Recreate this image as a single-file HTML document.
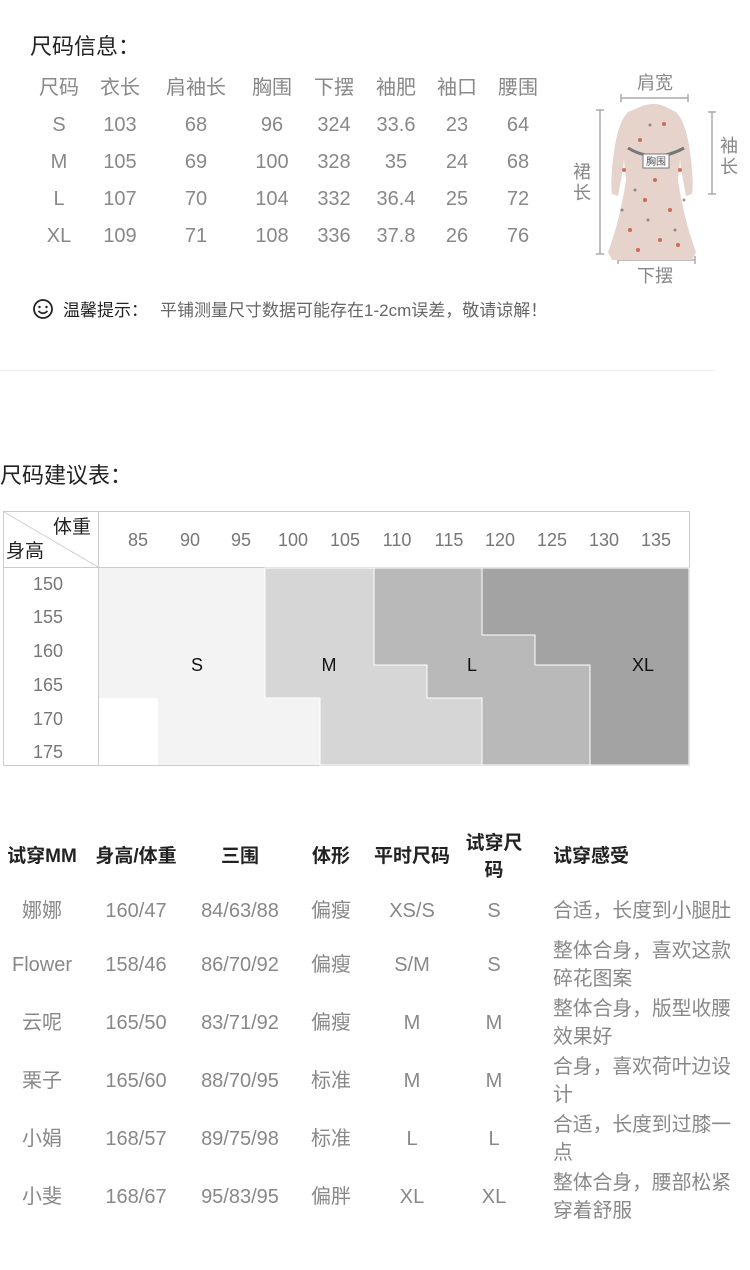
<!DOCTYPE html>
<html><head><meta charset="utf-8"><style>
*{margin:0;padding:0;box-sizing:border-box}
body{width:750px;height:1270px;background:#fff;position:relative;overflow:hidden;font-family:"Liberation Sans","Noto Sans CJK SC",sans-serif;color:#888}
.c{position:absolute;width:120px;text-align:center;white-space:nowrap;line-height:24px;transform:translate(-60px,-12px);font-size:20px}
.t{position:absolute;font-size:22px;color:#222;white-space:nowrap;line-height:26px}
.h{position:absolute;font-size:19px;color:#222;text-align:center;line-height:26px;white-space:nowrap;font-weight:bold}
.f{position:absolute;left:553px;font-size:19.8px;line-height:28px;width:182px;color:#888}
</style></head><body>
<div class="t" style="left:30px;top:34px">尺码信息：</div>
<div style="position:absolute;left:0;top:0">
<div class="c" style="left:59px;top:88px">尺码</div><div class="c" style="left:120px;top:88px">衣长</div><div class="c" style="left:196px;top:88px">肩袖长</div><div class="c" style="left:272px;top:88px">胸围</div><div class="c" style="left:334px;top:88px">下摆</div><div class="c" style="left:396px;top:88px">袖肥</div><div class="c" style="left:457px;top:88px">袖口</div><div class="c" style="left:518px;top:88px">腰围</div>
<div class="c" style="left:59px;top:125px">S</div><div class="c" style="left:120px;top:125px">103</div><div class="c" style="left:196px;top:125px">68</div><div class="c" style="left:272px;top:125px">96</div><div class="c" style="left:334px;top:125px">324</div><div class="c" style="left:396px;top:125px">33.6</div><div class="c" style="left:457px;top:125px">23</div><div class="c" style="left:518px;top:125px">64</div>
<div class="c" style="left:59px;top:162px">M</div><div class="c" style="left:120px;top:162px">105</div><div class="c" style="left:196px;top:162px">69</div><div class="c" style="left:272px;top:162px">100</div><div class="c" style="left:334px;top:162px">328</div><div class="c" style="left:396px;top:162px">35</div><div class="c" style="left:457px;top:162px">24</div><div class="c" style="left:518px;top:162px">68</div>
<div class="c" style="left:59px;top:199px">L</div><div class="c" style="left:120px;top:199px">107</div><div class="c" style="left:196px;top:199px">70</div><div class="c" style="left:272px;top:199px">104</div><div class="c" style="left:334px;top:199px">332</div><div class="c" style="left:396px;top:199px">36.4</div><div class="c" style="left:457px;top:199px">25</div><div class="c" style="left:518px;top:199px">72</div>
<div class="c" style="left:59px;top:236px">XL</div><div class="c" style="left:120px;top:236px">109</div><div class="c" style="left:196px;top:236px">71</div><div class="c" style="left:272px;top:236px">108</div><div class="c" style="left:334px;top:236px">336</div><div class="c" style="left:396px;top:236px">37.8</div><div class="c" style="left:457px;top:236px">26</div><div class="c" style="left:518px;top:236px">76</div>
</div>
<!-- dress -->
<svg style="position:absolute;left:560px;top:60px" width="190" height="240" viewBox="0 0 190 240">
<g font-family="Liberation Sans,Noto Sans CJK SC,sans-serif" fill="#888" font-size="18" text-anchor="middle">
<text x="95" y="29">肩宽</text>
<text x="22" y="118">裙</text><text x="22" y="139">长</text>
<text x="169" y="92">袖</text><text x="169" y="113">长</text>
<text x="95" y="222">下摆</text>
</g>
<g stroke="#aaa" stroke-width="1.5" fill="none">
<path d="M61 34v8M61 38h67M128 34v8"/>
<path d="M36 50h8M40 50v144M36 194h8"/>
<path d="M148 52h8M152 52v82M148 134h8"/>
<path d="M58 196v8M58 200h77M135 196v8"/>
</g>
<path d="M82 46q12-4 22 0l12 6q10 10 14 40q4 30 2 42l-6 2q-4-20-6-36l-2 20q6 40 18 72l-4 8h-80l-4-8q12-32 18-72l-2-20q-2 16-6 36l-6-2q-2-12 2-42q4-30 14-40z" fill="#e6d3cc"/>
<g fill="#c9503a" opacity=".8"><circle cx="80" cy="80" r="2"/><circle cx="95" cy="120" r="2"/><circle cx="110" cy="150" r="2"/><circle cx="70" cy="170" r="2"/><circle cx="100" cy="180" r="2"/><circle cx="120" cy="110" r="2"/><circle cx="85" cy="140" r="2"/><circle cx="78" cy="190" r="2"/><circle cx="118" cy="185" r="2"/><circle cx="64" cy="110" r="2"/><circle cx="104" cy="64" r="2"/></g>
<g fill="#555" opacity=".6"><circle cx="90" cy="65" r="1.5"/><circle cx="105" cy="95" r="1.5"/><circle cx="75" cy="130" r="1.5"/><circle cx="115" cy="170" r="1.5"/><circle cx="88" cy="160" r="1.5"/><circle cx="62" cy="150" r="1.5"/><circle cx="124" cy="140" r="1.5"/></g>
<path d="M68 88q27 16 56 0" stroke="#777" stroke-width="3" fill="none"/>
<rect x="83" y="94" width="26" height="14" fill="#fff" stroke="#777"/>
<text x="96" y="105" font-size="10" text-anchor="middle" fill="#555" font-family="Noto Sans CJK SC,sans-serif">胸围</text>
</svg>
<!-- tip -->
<svg style="position:absolute;left:32px;top:298px" width="22" height="22" viewBox="0 0 22 22"><circle cx="11" cy="11" r="9" fill="none" stroke="#222" stroke-width="1.8"/><circle cx="7.5" cy="9" r="1.2" fill="#222"/><circle cx="14.5" cy="9" r="1.2" fill="#222"/><path d="M6.5 13q4.5 4.5 9 0" stroke="#222" stroke-width="1.6" fill="none"/></svg>
<div style="position:absolute;left:63px;top:300px;font-size:17px;line-height:22px;white-space:nowrap"><span style="color:#222">温馨提示：</span><span style="margin-left:12px;color:#666">平铺测量尺寸数据可能存在1-2cm误差，敬请谅解！</span></div>
<div style="position:absolute;left:0;top:370px;width:715px;height:1px;background:#eee"></div>

<div class="t" style="left:0;top:463px">尺码建议表：</div>
<svg style="position:absolute;left:0;top:0" width="750" height="800">
<rect x="3.5" y="511.5" width="686" height="254" fill="#fff" stroke="#ccc"/>
<line x1="98.5" y1="511" x2="98.5" y2="766" stroke="#ccc"/>
<line x1="3" y1="567.5" x2="690" y2="567.5" stroke="#ccc"/>
<line x1="4" y1="512" x2="98" y2="567" stroke="#ccc"/>
<rect x="99" y="568" width="590" height="197" fill="#f3f3f3"/>
<rect x="99" y="698" width="59" height="67" fill="#fff"/>
<polygon points="265,568 374,568 374,665 427,665 427,698 482,698 482,765 320,765 320,698 265,698" fill="#d6d6d6" stroke="#fff"/>
<polygon points="374,568 482,568 482,635 535,635 535,665 590,665 590,765 482,765 482,698 427,698 427,665 374,665" fill="#b9b9b9" stroke="#fff"/>
<polygon points="482,568 689,568 689,765 590,765 590,665 535,665 535,635 482,635" fill="#a3a3a3" stroke="#fff"/>
<g font-family="Liberation Sans,sans-serif" font-size="18" fill="#777" text-anchor="middle">
<text x="138" y="546">85</text><text x="190" y="546">90</text><text x="241" y="546">95</text><text x="293" y="546">100</text><text x="345" y="546">105</text><text x="397" y="546">110</text><text x="449" y="546">115</text><text x="500" y="546">120</text><text x="552" y="546">125</text><text x="604" y="546">130</text><text x="656" y="546">135</text>
<text x="48" y="590">150</text><text x="48" y="623">155</text><text x="48" y="657">160</text><text x="48" y="691">165</text><text x="48" y="725">170</text><text x="48" y="758">175</text>
</g>
<g font-family="Liberation Sans,sans-serif" font-size="18" fill="#111" text-anchor="middle">
<text x="197" y="671">S</text><text x="329" y="671">M</text><text x="472" y="671">L</text><text x="643" y="671">XL</text>
</g>
<g font-family="Liberation Sans,Noto Sans CJK SC,sans-serif" font-size="19" fill="#222">
<text x="53" y="533">体重</text><text x="6" y="557">身高</text>
</g>
</svg>

<div class="h" style="left:0;width:84px;top:844px">试穿MM</div>
<div class="h" style="left:86px;width:100px;top:844px">身高/体重</div>
<div class="h" style="left:200px;width:80px;top:844px">三围</div>
<div class="h" style="left:300px;width:62px;top:844px">体形</div>
<div class="h" style="left:367px;width:90px;top:844px">平时尺码</div>
<div class="h" style="left:464px;width:60px;top:830px;line-height:27px;white-space:normal">试穿尺<br>码</div>
<div class="h" style="left:553px;top:844px">试穿感受</div>

<div class="c" style="left:42px;top:911px">娜娜</div><div class="c" style="left:136px;top:911px">160/47</div><div class="c" style="left:240px;top:911px">84/63/88</div><div class="c" style="left:331px;top:911px">偏瘦</div><div class="c" style="left:412px;top:911px">XS/S</div><div class="c" style="left:494px;top:911px">S</div>
<div class="f" style="top:897px">合适，长度到小腿肚</div>
<div class="c" style="left:42px;top:965px">Flower</div><div class="c" style="left:136px;top:965px">158/46</div><div class="c" style="left:240px;top:965px">86/70/92</div><div class="c" style="left:331px;top:965px">偏瘦</div><div class="c" style="left:412px;top:965px">S/M</div><div class="c" style="left:494px;top:965px">S</div>
<div class="f" style="top:937px">整体合身，喜欢这款碎花图案</div>
<div class="c" style="left:42px;top:1023px">云呢</div><div class="c" style="left:136px;top:1023px">165/50</div><div class="c" style="left:240px;top:1023px">83/71/92</div><div class="c" style="left:331px;top:1023px">偏瘦</div><div class="c" style="left:412px;top:1023px">M</div><div class="c" style="left:494px;top:1023px">M</div>
<div class="f" style="top:995px">整体合身，版型收腰效果好</div>
<div class="c" style="left:42px;top:1081px">栗子</div><div class="c" style="left:136px;top:1081px">165/60</div><div class="c" style="left:240px;top:1081px">88/70/95</div><div class="c" style="left:331px;top:1081px">标准</div><div class="c" style="left:412px;top:1081px">M</div><div class="c" style="left:494px;top:1081px">M</div>
<div class="f" style="top:1053px">合身，喜欢荷叶边设计</div>
<div class="c" style="left:42px;top:1139px">小娟</div><div class="c" style="left:136px;top:1139px">168/57</div><div class="c" style="left:240px;top:1139px">89/75/98</div><div class="c" style="left:331px;top:1139px">标准</div><div class="c" style="left:412px;top:1139px">L</div><div class="c" style="left:494px;top:1139px">L</div>
<div class="f" style="top:1111px">合适，长度到过膝一点</div>
<div class="c" style="left:42px;top:1197px">小斐</div><div class="c" style="left:136px;top:1197px">168/67</div><div class="c" style="left:240px;top:1197px">95/83/95</div><div class="c" style="left:331px;top:1197px">偏胖</div><div class="c" style="left:412px;top:1197px">XL</div><div class="c" style="left:494px;top:1197px">XL</div>
<div class="f" style="top:1169px">整体合身，腰部松紧穿着舒服</div>
</body></html>
